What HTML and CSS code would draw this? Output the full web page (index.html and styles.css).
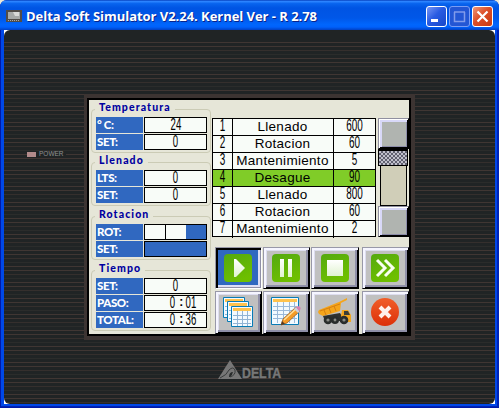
FILE: index.html
```html
<!DOCTYPE html>
<html lang="es">
<head>
<meta charset="utf-8">
<title>Delta Soft Simulator</title>
<link rel="stylesheet" href="styles.css">
</head>
<body>
<svg class="defs" aria-hidden="true">
  <defs>
    <linearGradient id="green" x1="0" y1="0" x2=".4" y2="1"><stop offset="0" stop-color="#54a910"/><stop offset="1" stop-color="#6ebf00"/></linearGradient>
    <linearGradient id="pale" x1="0" y1="0" x2="0" y2="1"><stop offset="0" stop-color="#fff"/><stop offset="1" stop-color="#e0f3cf"/></linearGradient>
    <linearGradient id="red" x1="0" y1="0" x2="0" y2="1"><stop offset="0" stop-color="#f15e29"/><stop offset="1" stop-color="#dc3008"/></linearGradient>
    <g id="sheet">
      <path d="M.5.5h21v20h-21z" fill="#f3faff" stroke="#087bb5"/>
      <path d="M2 2h18v3H2z" fill="#ffc34d"/>
      <path d="M2 9.500h18M2 13.500h18M2 17.500h18M6.500 5v15M11.500 5v15M16.500 5v15" stroke="#91b4d5" fill="none"/>
    </g>
  </defs>
</svg>
<div class="window">
  <header class="titlebar">
    <svg class="app-icon" width="16" height="12"><path d="M0 0h16v12H0z" fill="#514d48"/><path d="M2 2h12v7H2z" fill="#a7aaa8"/><path d="M7 2h6v4H9z" fill="#dadbd8"/><path d="M2 10.500h12" stroke="#aaa" stroke-dasharray="1 1"/></svg>
    <h1 class="title">Delta Soft Simulator V2.24. Kernel Ver - R 2.78</h1>
    <div class="controls">
      <span class="control"><svg width="19" height="19"><path d="M4 12h7v3H4z" fill="#fff"/></svg></span>
      <span class="control disabled"><svg width="19" height="19"><path d="M4.500 5v9.500h10V5M4 5h11" fill="none" stroke="#819bea" stroke-width="1.500"/></svg></span>
      <span class="control close"><svg width="19" height="19"><path d="M4.500 4.500l10 10m0-10l-10 10" stroke="#fff" stroke-width="2.200"/></svg></span>
    </div>
  </header>
  <div class="client">
  <main class="device">
    <div class="power"><i class="led"></i><span>POWER</span></div>
    <section class="screen">
      <div class="readings">
        <fieldset class="group"><legend>Temperatura</legend>
          <div class="row"><b>° C:</b><div class="value"><span>24</span></div></div>
          <div class="row"><b>SET:</b><div class="value"><span>0</span></div></div>
        </fieldset>
        <fieldset class="group"><legend>Llenado</legend>
          <div class="row"><b>LTS:</b><div class="value"><span>0</span></div></div>
          <div class="row"><b>SET:</b><div class="value"><span>0</span></div></div>
        </fieldset>
        <fieldset class="group rotacion"><legend>Rotacion</legend>
          <div class="row"><b>ROT:</b><div class="value segments"><i></i><i></i><i></i></div></div>
          <div class="row"><b>SET:</b><div class="value full"></div></div>
        </fieldset>
        <fieldset class="group tiempo"><legend>Tiempo</legend>
          <div class="row"><b>SET:</b><div class="value"><span>0</span></div></div>
          <div class="row"><b>PASO:</b><div class="value time"><span>0</span><em>:</em><span>01</span></div></div>
          <div class="row"><b>TOTAL:</b><div class="value time"><span>0</span><em>:</em><span>36</span></div></div>
        </fieldset>
      </div>
      <div class="work">
        <div class="program">
          <div class="steps">
            <div class="step"><span>1</span><p>Llenado</p><span>600</span></div>
            <div class="step"><span>2</span><p>Rotacion</p><span>60</span></div>
            <div class="step"><span>3</span><p>Mantenimiento</p><span>5</span></div>
            <div class="step active"><span>4</span><p>Desague</p><span>90</span></div>
            <div class="step"><span>5</span><p>Llenado</p><span>800</span></div>
            <div class="step"><span>6</span><p>Rotacion</p><span>60</span></div>
            <div class="step"><span>7</span><p>Mantenimiento</p><span>2</span></div>
          </div>
          <div class="scroll">
            <div class="arrow"></div>
            <div class="thumb"></div>
            <div class="track"></div>
            <div class="arrow"></div>
          </div>
        </div>
        <div class="buttons">
          <div class="btn pressed"><svg width="28" height="28"><rect width="28" height="28" rx="4" fill="url(#green)"/><path d="M10 5h2l9 9-9 9h-2z" fill="url(#pale)"/></svg></div>
          <div class="btn"><svg width="28" height="28"><rect width="28" height="28" rx="4" fill="url(#green)"/><path d="M8 5h4v18H8zM16 5h4v18h-4z" fill="url(#pale)"/></svg></div>
          <div class="btn"><svg width="28" height="28"><rect width="28" height="28" rx="4" fill="url(#green)"/><path d="M6 6h16v16H6z" fill="url(#pale)"/></svg></div>
          <div class="btn"><svg width="28" height="28"><rect width="28" height="28" rx="4" fill="url(#green)"/><path d="M6 6l8 8-8 8M14 6l8 8-8 8" fill="none" stroke="#f8fff1" stroke-width="3"/></svg></div>
          <div class="btn"><svg width="32" height="32" viewBox="0 0 32 32"><use href="#sheet" x="1" y="1"/><use href="#sheet" x="5" y="5"/><use href="#sheet" x="9" y="10"/></svg></div>
          <div class="btn"><svg width="32" height="32" viewBox="0 0 32 32"><path d="M1.500 1.500h27v27h-27z" fill="#f1faff" stroke="#087bb5"/><path d="M3 3h24v3H3z" fill="#ffc34d"/><path d="M3 10.500h24M3 14.500h24M3 18.500h24M3 22.500h24M7.500 6v21M13.500 6v21M19.500 6v21M24.500 6v21" stroke="#9ab9d9"/><path d="M11 29l2-6 13-12 4 4-13 12z" fill="#f59b25" stroke="#8c541b" stroke-width=".7"/><path d="M14 24l13-12" stroke="#ffe09b" stroke-width="1.500"/><path d="M24 13l2-2 4 4-2 2z" fill="#ccd0dc"/><path d="M26 11l2-1q4 1 2 4l-1 1z" fill="#d67fb3"/><path d="M11 29l1-4 3 3z" fill="#553822"/></svg></div>
          <div class="btn"><svg width="36" height="30" viewBox="0 0 36 30"><path d="M1 15l1-2 20-8 6-3 2-1v2l-6 3-1 8-17 5-4-2z" fill="#f5a51b"/><path d="M3 14l20-7M7 13l2 5M12 11l2 5M17 9l2 5" stroke="#d78010" fill="none"/><path d="M6 19l17-3 3 5-3 3H8z" fill="#30322f"/><path d="M25 13h6l3 5v7h-8l-2-6z" fill="#f3a51c"/><path d="M27 14h4l2 4h-6z" fill="#3b3e37"/><g fill="#292d2c"><circle cx="11" cy="23" r="4.300"/><circle cx="18" cy="23" r="4"/><circle cx="27" cy="23" r="4.300"/></g><g fill="#8a8c86"><circle cx="11" cy="23" r="1.600"/><circle cx="18" cy="23" r="1.400"/><circle cx="27" cy="23" r="1.600"/></g></svg></div>
          <div class="btn"><svg width="28" height="28"><circle cx="14" cy="14" r="14" fill="url(#red)"/><path d="M9 9l10 10M19 9L9 19" stroke="#fff2eb" stroke-width="4"/></svg></div>
        </div>
      </div>
    </section>
    <div class="brand"><svg width="25" height="20" viewBox="0 0 25 20"><path d="M12 0l12 19H0z" fill="#777"/><path d="M2 18Q9 15 11 10q4-4 6 0 1 5-5 7" fill="none" stroke="#383b3b"/><path d="M12 17q2-1 3-5-4 0-4 5z" fill="#282b2b"/></svg><span>DELTA</span></div>
  </main>
  </div>
</div>
</body>
</html>
```

FILE: styles.css
```css
* { box-sizing: border-box; }
body { margin: 0; width: 499px; height: 408px; overflow: hidden; background: #ece9d8; font-family: "Liberation Sans", sans-serif; }
.defs { position: absolute; width: 0; height: 0; }
svg { display: block; flex: none; }
.window { width: 499px; height: 408px; padding: 0 4px 4px; border-radius: 7px 7px 0 0; background: #0048e8; box-shadow: inset 1px -1px #0019a8, inset -2px -2px #0023b5; }
.titlebar { height: 30px; margin: 0 -4px; padding: 1px 6px 0; display: flex; align-items: center; border-radius: 7px 7px 0 0; background: linear-gradient(#0740bd 0, #2b83ff 5%, #0864ee 12%, #0054e3 27%, #0057e8 60%, #0066fd 82%, #0061fb 90%, #0040c4 100%); }
.title { width: 300px; margin: 0 0 0 4px; font: 700 13px/18px "Open Sans", sans-serif; color: #fff; white-space: nowrap; text-shadow: 1px 1px #08248c; letter-spacing: -.04px; }
.controls { display: flex; gap: 2px; margin-left: auto; margin-top: 2px; }
.control { width: 21px; height: 21px; border: 1px solid #fff; border-radius: 3px; background: linear-gradient(135deg, #7896f4, #295be2 45%, #1747c9); }
.disabled { border-color: #7a9df4; background: #2356d4; }
.close { background: linear-gradient(135deg, #f09778, #dc4e28 45%, #c83b12); }
.client { background: #fff; height: 374px; width: 491px; }
.device { height: 374px; display: grid; grid-template-columns: 80px 331px 80px; grid-template-rows: 64px 246px 64px; overflow: hidden; border-radius: 6px; background: linear-gradient(#202425 0 12px, transparent 12px), repeating-linear-gradient(#403633 0 1px, #202425 1px 4px, #403633 4px 5px, #202425 5px 8px, #352f2d 8px 9px, #202425 9px 12px, #2b2c2b 12px 13px, #202425 13px 16px); background-position: 0 0, 0 12px; }
.power { grid-row: 2; display: flex; gap: 3px; height: 6px; margin: 57px 0 0 23px; width: 39px; align-items: center; background: #202425; font-size: 6.500px; line-height: 6px; color: #909090; }
.led { width: 9px; height: 5px; background: #b28b8b; flex: none; }
.screen { grid-column: 2; grid-row: 2; display: flex; border: 4px solid #3c3432; border-left-width: 3px; padding: 2px; background: #e6e6d8; box-shadow: inset 0 0 0 2px #000; height: 246px; width: 331px; }
.readings { width: 123px; padding: 9px 0 0 2px; flex: none; }
.group { width: 120px; height: 44px; margin: 0 0 9px; padding: 7px 0 0 4px; border: 1px solid #cbcbb5; border-radius: 4px; min-width: 0; }
.group legend { float: left; height: 12px; margin: -16px 0 0 -1px; padding: 0 4px; background: #e6e6d8; font: 900 10.500px/12px Lato, sans-serif; letter-spacing: 1.1px; color: #0000a0; }
.row { clear: both; display: flex; height: 16px; margin-bottom: 1px; gap: 1px; }
.row b { width: 47px; padding-left: 1px; background: #3068c0; color: #fff; font: 900 11.500px/15px Lato, sans-serif; letter-spacing: -.4px; }
.value { width: 63px; height: 16px; border: 1px solid #000; background: #f8fcf8; display: flex; justify-content: center; align-items: center; }
.value span, .step span { display: block; font: 16px/15px "Liberation Sans", sans-serif; height: 15px; }
.value span { transform: translateY(-1px) scaleX(.6); }
.step span { transform: translateY(-1px) scaleX(.62); }
.time { justify-content: flex-end; padding-right: 6px; }
.time em { font: bold 12px/12px "Liberation Sans"; margin: -2px -1px 0 2px; }
.value.segments { display: flex; justify-content: flex-start; align-items: stretch; background: #3068c0; }
.segments i { width: 21px; background: #f8fcf8; border-right: 1px solid #000; }
.segments i:nth-child(2) { width: 20px; border: 0; }
.segments i:last-child { flex: 1; background: #3068c0; border: 0; }
.value.full { background: #3068c0; }
.group.rotacion { margin-top: 10px; margin-bottom: 10px; }
.group.tiempo { height: 61px; margin-bottom: 0; }
.work { width: 197px; flex: none; }
.program { display: flex; margin-top: 18px; height: 129px; }
.steps { width: 164px; height: 119px; border: 1px solid #000; background: #f8fcf8; }
.step { display: grid; grid-template-columns: 19px 102px 41px; height: 17px; border-bottom: 1px solid #000; text-align: center; }
.step:last-child { border-bottom: 0; }
.step p { margin: 0; border: solid #000; border-width: 0 1px; font: 13.500px/16px "Liberation Sans", sans-serif; letter-spacing: .3px; padding-right: 1px; }
.active { background: #80cc28; }
.scroll { width: 32px; height: 119px; margin-left: 1px; display: flex; flex-direction: column; align-items: center; }
.arrow { width: 31px; height: 31px; background: #b0b4b0; border: 1px solid; border-color: #9090a0 #000 #000 #9090a0; box-shadow: inset 1px 1px #fff, inset -1px -1px #000, inset 3px 3px #d8d8f8, inset -2px -2px #8c8ca8; }
.thumb { width: 30px; height: 17px; border: 1px solid #000; border-top-width: 2px; background: repeating-conic-gradient(#606070 0 25%, #c0c0cc 0 50%) 0 0/4px 4px; }
.track { width: 27px; height: 40px; border: 1px solid #000; border-top: 0; background: #d0ceb8; }
.buttons { display: grid; grid-template-columns: 47px 47px 50px 47px; grid-template-rows: 42px 43px; gap: 2px 1px; margin-left: 3px; }
.btn { display: flex; align-items: center; justify-content: center; border: 1px solid; border-color: #9898a8 #000 #000 #9898a8; background: #c0c0c0; box-shadow: inset 2px 2px #f5f5ff, inset -1px -1px #000, inset -3px -3px #9090a8, inset 3px 3px #ddddef; }
.btn svg { margin: 0 1px 1px 0; }
.btn:nth-child(4n + 3) { width: 48px; }
.pressed { background: #3068c0; border-color: #9898a8 #fff #fff #9898a8; box-shadow: inset 2px 2px #000, inset -1px -1px #9090a8, inset -3px -3px #dedef5; }
.brand { grid-column: 2; grid-row: 3; display: flex; margin: 20px 0 0 134px; height: 20px; width: 65px; color: #777; }
.brand span { font: bold 14px/12px "Liberation Sans", sans-serif; margin: 7px 0 0 -1px; transform: scaleX(.88); transform-origin: left; -webkit-text-stroke: .4px #777; }
```
